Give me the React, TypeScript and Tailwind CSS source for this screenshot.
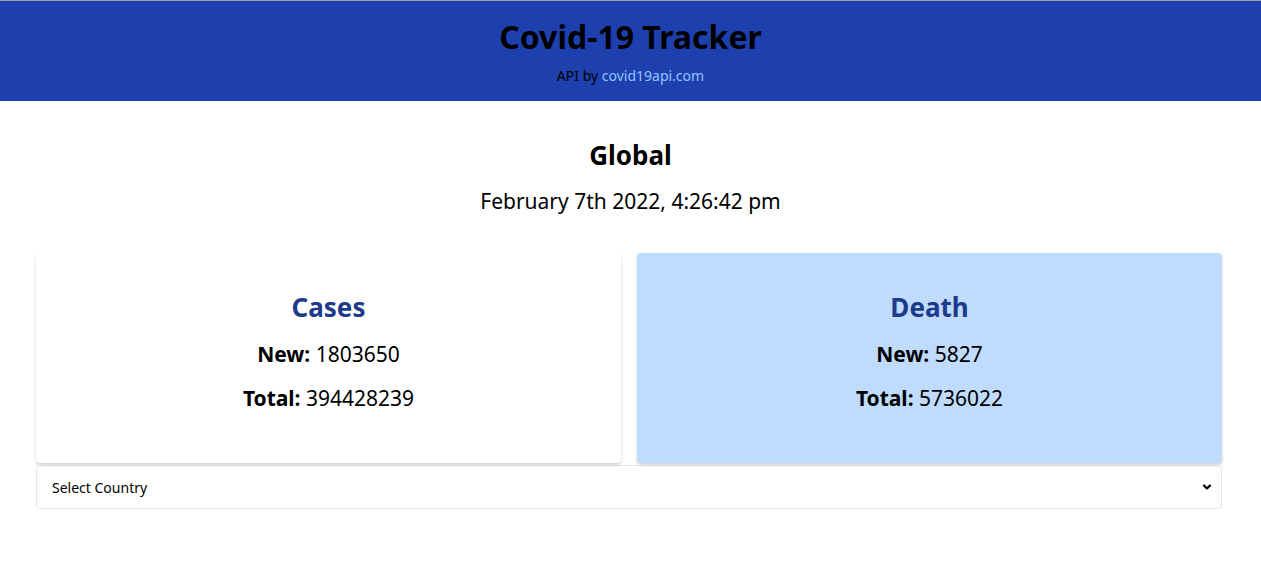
import { ChevronDown } from "lucide-react";

type Stat = { title: string; newCount: number; total: number; tone: "white" | "blue" };

const stats: Stat[] = [
  { title: "Cases", newCount: 1803650, total: 394428239, tone: "white" },
  { title: "Death", newCount: 5827, total: 5736022, tone: "blue" },
];

function StatCard({ stat }: { stat: Stat }) {
  return (
    <div
      className={`flex-1 h-[210px] rounded flex flex-col items-center justify-center pb-[14px] shadow-[0_2px_3px_rgba(0,0,0,0.18)] ${
        stat.tone === "blue" ? "bg-[#bfdbfe]" : "bg-white"
      }`}
    >
      <h3 className="text-[26px] font-bold text-[#1e3a8a] leading-none">{stat.title}</h3>
      <p className="mt-[24px] text-[21px] leading-none">
        <span className="font-bold">New:</span> {stat.newCount}
      </p>
      <p className="mt-[23px] text-[21px] leading-none">
        <span className="font-bold">Total:</span> {stat.total}
      </p>
    </div>
  );
}

export default function App() {
  return (
    <div className="min-h-[562px] bg-white text-black font-['Noto_Sans',sans-serif]">
      <header className="h-[101px] bg-[#1e40af] border-t border-gray-400 flex flex-col items-center">
        <h1 className="mt-[20px] text-[32px] font-bold leading-none">Covid-19 Tracker</h1>
        <p className="mt-[16px] text-[14px] leading-none">
          API by <a className="text-[#93c5fd]">covid19api.com</a>
        </p>
      </header>

      <section className="flex flex-col items-center">
        <h2 className="mt-[41px] text-[26px] font-bold leading-none">Global</h2>
        <p className="mt-[23px] text-[21px] leading-none">February 7th 2022, 4:26:42 pm</p>
      </section>

      <main className="ml-[36px] w-[1186px] mt-[41px]">
        <div className="flex gap-[16px]">
          {stats.map((s) => (
            <StatCard key={s.title} stat={s} />
          ))}
        </div>
        <div className="mt-[2px] h-[44px] border border-gray-200 rounded flex items-center justify-between pl-[15px] pr-[8px] text-[14px]">
          <span>Select Country</span>
          <ChevronDown className="w-3 h-3" strokeWidth={4.5} />
        </div>
      </main>
    </div>
  );
}
